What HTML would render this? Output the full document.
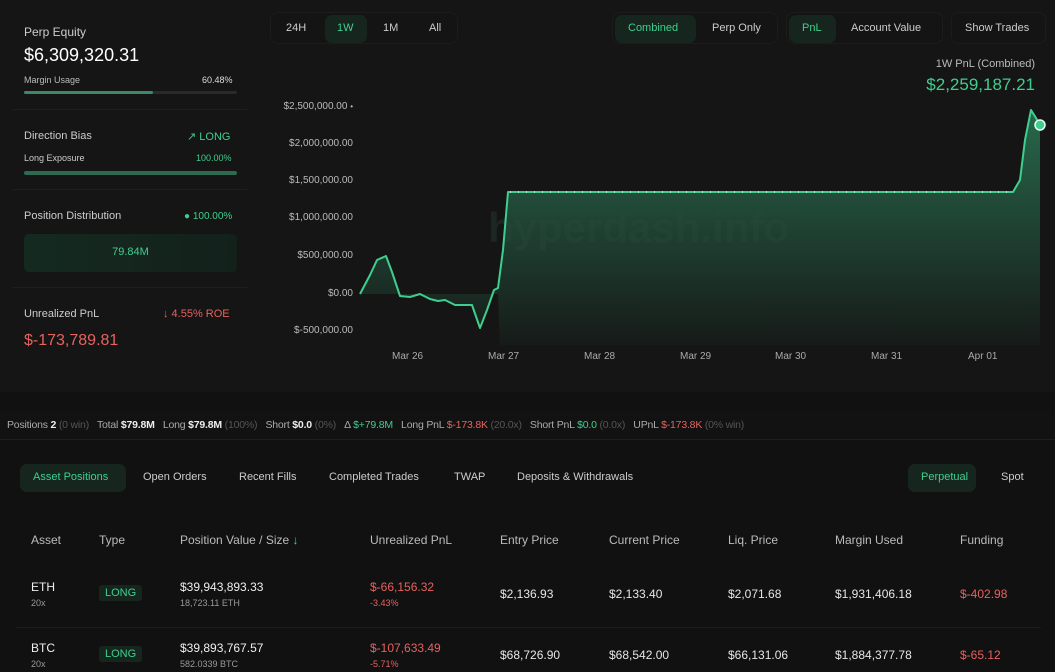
<!DOCTYPE html>
<html><head><meta charset="utf-8"><style>
*{box-sizing:border-box;margin:0;padding:0}
body{width:1055px;height:672px;overflow:hidden;background:#111112;font-family:"Liberation Sans",sans-serif;color:#e6e6e6;position:relative}
.a{position:absolute;white-space:nowrap}
.g{color:#3ecf8e}.r{color:#e5625f}.m{color:#9a9a9a}
.top{position:absolute;left:0;top:0;width:1055px;height:392px;background:#151515}
.seg{position:absolute;height:32px;border-radius:8px;background:#141414;border:1px solid #1c1c1c}
.on{position:absolute;background:#16261f;border-radius:7px;color:#3ecf8e}
.bar{position:absolute;height:4px;border-radius:2px;background:#2a2a2a}
.sep{position:absolute;left:12px;width:235px;height:1px;background:#1e1e1e}
.yl{position:absolute;right:702px;font-size:10px;color:#bbb}
.xl{position:absolute;top:351px;font-size:10px;color:#aaa}
</style></head><body>
<div class="top"></div>
<div class="a" style="left:24px;top:25px;font-size:12px;color:#ccc">Perp Equity</div>
<div class="a" style="left:24px;top:45px;font-size:18px;color:#fff">$6,309,320.31</div>
<div class="a" style="left:24px;top:75px;font-size:9px;color:#bbb">Margin Usage</div>
<div class="a" style="left:202px;top:75px;font-size:9px;color:#ddd">60.48%</div>
<div class="bar" style="left:24px;top:91px;width:213px;height:3px"></div>
<div class="bar" style="left:24px;top:91px;width:129px;height:3px;background:#3a8a68"></div>
<div class="sep" style="top:109px"></div>
<div class="a" style="left:24px;top:130px;font-size:11px;color:#ccc">Direction Bias</div>
<div class="a g" style="left:187px;top:130px;font-size:11px">↗ LONG</div>
<div class="a" style="left:24px;top:153px;font-size:9px;color:#ccc">Long Exposure</div>
<div class="a g" style="left:196px;top:153px;font-size:9px">100.00%</div>
<div class="bar" style="left:24px;top:171px;width:213px;height:4px;background:#2d6a50"></div>
<div class="sep" style="top:189px"></div>
<div class="a" style="left:24px;top:210px;font-size:11px;color:#ccc">Position Distribution</div>
<div class="a g" style="left:184px;top:211px;font-size:10px">● 100.00%</div>
<div class="a" style="left:24px;top:234px;width:213px;height:38px;border-radius:5px;background:linear-gradient(90deg,#142a20,#13211b);"></div>
<div class="a g" style="left:24px;top:246px;width:213px;text-align:center;font-size:11px">79.84M</div>
<div class="sep" style="top:287px"></div>
<div class="a" style="left:24px;top:308px;font-size:11px;color:#ccc">Unrealized PnL</div>
<div class="a r" style="left:163px;top:308px;font-size:11px">↓ 4.55% ROE</div>
<div class="a r" style="left:24px;top:332px;font-size:16px">$-173,789.81</div>
<div class="seg" style="left:270px;top:12px;width:188px"></div>
<div class="on" style="left:325px;top:15px;width:42px;height:28px"></div>
<div class="a" style="left:286px;top:22px;font-size:11px;color:#ccc">24H</div>
<div class="a g" style="left:337px;top:22px;font-size:11px">1W</div>
<div class="a" style="left:383px;top:22px;font-size:11px;color:#ccc">1M</div>
<div class="a" style="left:429px;top:22px;font-size:11px;color:#ccc">All</div>
<div class="seg" style="left:612px;top:12px;width:166px"></div>
<div class="on" style="left:615px;top:15px;width:81px;height:28px"></div>
<div class="a g" style="left:628px;top:22px;font-size:11px">Combined</div>
<div class="a" style="left:712px;top:22px;font-size:11px;color:#ccc">Perp Only</div>
<div class="seg" style="left:786px;top:12px;width:157px"></div>
<div class="on" style="left:789px;top:15px;width:47px;height:28px"></div>
<div class="a g" style="left:802px;top:22px;font-size:11px">PnL</div>
<div class="a" style="left:851px;top:22px;font-size:11px;color:#ccc">Account Value</div>
<div class="seg" style="left:951px;top:12px;width:95px"></div>
<div class="a" style="left:965px;top:22px;font-size:11px;color:#ccc">Show Trades</div>
<div class="a" style="right:20px;top:58px;font-size:11px;color:#bbb">1W PnL (Combined)</div>
<div class="a g" style="right:20px;top:75px;font-size:17px">$2,259,187.21</div>
<div class="yl" style="top:101px">$2,500,000.00 <span style="font-size:8px">•</span></div>
<div class="yl" style="top:138px">$2,000,000.00</div>
<div class="yl" style="top:175px">$1,500,000.00</div>
<div class="yl" style="top:212px">$1,000,000.00</div>
<div class="yl" style="top:250px">$500,000.00</div>
<div class="yl" style="top:288px">$0.00</div>
<div class="yl" style="top:325px">$-500,000.00</div>
<div class="xl" style="left:392px">Mar 26</div>
<div class="xl" style="left:488px">Mar 27</div>
<div class="xl" style="left:584px">Mar 28</div>
<div class="xl" style="left:680px">Mar 29</div>
<div class="xl" style="left:775px">Mar 30</div>
<div class="xl" style="left:871px">Mar 31</div>
<div class="xl" style="left:968px">Apr 01</div>
<svg class="a" style="left:0;top:0" width="1055" height="392">
<defs><linearGradient id="f" x1="0" y1="0" x2="0" y2="1"><stop offset="0" stop-color="#3ecf8e" stop-opacity=".45"/><stop offset="1" stop-color="#3ecf8e" stop-opacity=".03"/></linearGradient></defs>
<path d="M360,294 L370,275 L377,260 L386,256 L392,272 L400,296 L410,297 L420,294 L430,299 L438,301 L445,300 L455,305 L472,305 L480,328 L487,310 L494,290 L498,288 L503,250 L508,192 L1013,192 L1020,180 L1025,140 L1031,110 L1036,118 L1040,125 L1040,345 L500,345 L498,294 Z" fill="url(#f)"/>
<text x="488" y="242" font-size="42" font-weight="bold" fill="#2a4a3c" fill-opacity=".35" font-family="Liberation Sans">hyperdash.info</text>
<path d="M360,294 L370,275 L377,260 L386,256 L392,272 L400,296 L410,297 L420,294 L430,299 L438,301 L445,300 L455,305 L472,305 L480,328 L487,310 L494,290 L498,288 L503,250 L508,192 L1013,192 L1020,180 L1025,140 L1031,110 L1036,118 L1040,125" fill="none" stroke="#3ecf8e" stroke-width="2" stroke-linejoin="round"/>
<path d="M510,192 L1012,192" stroke="#cfeee0" stroke-width="1.5" stroke-dasharray="1 7"/>
<circle cx="1040" cy="125" r="5" fill="#3ecf8e" stroke="#e8fff4" stroke-width="1.5"/>
</svg>
<div class="a" style="left:0;top:410px;width:1055px;height:30px;background:#121212;border-bottom:1px solid #1f1f1f"></div>
<div class="a" style="left:7px;top:419px;font-size:10.5px;color:#aaa;letter-spacing:-0.2px">Positions <b style="color:#eee">2</b> <span style="color:#555">(0 win)</span>&nbsp;&nbsp; Total <b style="color:#eee">$79.8M</b>&nbsp;&nbsp; Long <b style="color:#eee">$79.8M</b> <span style="color:#555">(100%)</span>&nbsp;&nbsp; Short <b style="color:#eee">$0.0</b> <span style="color:#555">(0%)</span>&nbsp;&nbsp; Δ <span class="g">$+79.8M</span>&nbsp;&nbsp; Long PnL <span class="r">$-173.8K</span> <span style="color:#555">(20.0x)</span>&nbsp;&nbsp; Short PnL <span class="g">$0.0</span> <span style="color:#555">(0.0x)</span>&nbsp;&nbsp; UPnL <span class="r">$-173.8K</span> <span style="color:#555">(0% win)</span></div>
<div class="on" style="left:20px;top:464px;width:106px;height:28px"></div>
<div class="a g" style="left:33px;top:471px;font-size:11px">Asset Positions</div>
<div class="a" style="left:143px;top:471px;font-size:11px;color:#ccc">Open Orders</div>
<div class="a" style="left:239px;top:471px;font-size:11px;color:#ccc">Recent Fills</div>
<div class="a" style="left:329px;top:471px;font-size:11px;color:#ccc">Completed Trades</div>
<div class="a" style="left:454px;top:471px;font-size:11px;color:#ccc">TWAP</div>
<div class="a" style="left:517px;top:471px;font-size:11px;color:#ccc">Deposits &amp; Withdrawals</div>
<div class="on" style="left:908px;top:464px;width:68px;height:28px"></div>
<div class="a g" style="left:921px;top:471px;font-size:11px">Perpetual</div>
<div class="a" style="left:1001px;top:471px;font-size:11px;color:#ccc">Spot</div>
<div class="a" style="top:533px;left:0;font-size:12px;color:#bbb;width:1055px;height:16px">
<span class="a" style="left:31px">Asset</span><span class="a" style="left:99px">Type</span><span class="a" style="left:180px">Position Value / Size <span class="g">↓</span></span><span class="a" style="left:370px">Unrealized PnL</span><span class="a" style="left:500px">Entry Price</span><span class="a" style="left:609px">Current Price</span><span class="a" style="left:728px">Liq. Price</span><span class="a" style="left:835px">Margin Used</span><span class="a" style="left:960px">Funding</span></div>
<div class="a" style="left:31px;top:580px;font-size:12px;color:#eee">ETH</div>
<div class="a m" style="left:31px;top:598px;font-size:9px">20x</div>
<div class="a g" style="left:99px;top:585px;padding:2px 6px;background:#16261f;border-radius:3px;font-size:11px">LONG</div>
<div class="a" style="left:180px;top:580px;font-size:12px;color:#eee">$39,943,893.33</div>
<div class="a m" style="left:180px;top:598px;font-size:9px">18,723.11 ETH</div>
<div class="a r" style="left:370px;top:580px;font-size:12px">$-66,156.32</div>
<div class="a r" style="left:370px;top:598px;font-size:9px">-3.43%</div>
<div class="a" style="left:500px;top:587px;font-size:12px">$2,136.93</div>
<div class="a" style="left:609px;top:587px;font-size:12px">$2,133.40</div>
<div class="a" style="left:728px;top:587px;font-size:12px">$2,071.68</div>
<div class="a" style="left:835px;top:587px;font-size:12px">$1,931,406.18</div>
<div class="a r" style="left:960px;top:587px;font-size:12px">$-402.98</div>
<div class="a" style="left:16px;top:627px;width:1025px;height:1px;background:#1c1c1c"></div>
<div class="a" style="left:31px;top:641px;font-size:12px;color:#eee">BTC</div>
<div class="a m" style="left:31px;top:659px;font-size:9px">20x</div>
<div class="a g" style="left:99px;top:646px;padding:2px 6px;background:#16261f;border-radius:3px;font-size:11px">LONG</div>
<div class="a" style="left:180px;top:641px;font-size:12px;color:#eee">$39,893,767.57</div>
<div class="a m" style="left:180px;top:659px;font-size:9px">582.0339 BTC</div>
<div class="a r" style="left:370px;top:641px;font-size:12px">$-107,633.49</div>
<div class="a r" style="left:370px;top:659px;font-size:9px">-5.71%</div>
<div class="a" style="left:500px;top:648px;font-size:12px">$68,726.90</div>
<div class="a" style="left:609px;top:648px;font-size:12px">$68,542.00</div>
<div class="a" style="left:728px;top:648px;font-size:12px">$66,131.06</div>
<div class="a" style="left:835px;top:648px;font-size:12px">$1,884,377.78</div>
<div class="a r" style="left:960px;top:648px;font-size:12px">$-65.12</div>
</body></html>
